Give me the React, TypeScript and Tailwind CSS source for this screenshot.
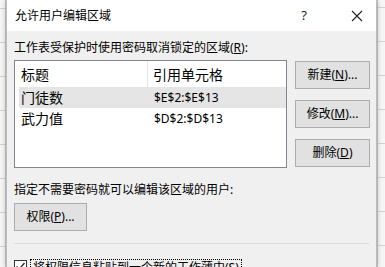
import React from "react";

const font = { fontFamily: '"Noto Sans", "Noto Sans CJK SC", sans-serif' };

function Strip({ first }: { first: number }) {
  const rows = Array.from({ length: 9 });
  return (
    <div className="flex flex-col bg-[#f7f7f7] h-full overflow-hidden">
      <div className="shrink-0 border-b border-[#d4d4d4]" style={{ height: first }} />
      {rows.map((_, i) => (
        <div key={i} className="shrink-0 h-[34px] border-b border-[#d4d4d4]" />
      ))}
    </div>
  );
}

function Btn({ children, w }: { children: React.ReactNode; w: string }) {
  return (
    <div
      className={`${w} h-[28px] flex items-center justify-center bg-[#e1e1e1] border border-[#adadad] text-[12px] text-black leading-none`}
    >
      {children}
    </div>
  );
}

export default function App() {
  return (
    <div className="w-[385px] h-[267px] overflow-hidden flex bg-white" style={font}>
      <div className="w-[6px] shrink-0 border-r border-[#c8c8c8]">
        <Strip first={9} />
      </div>
      <div className="w-[371px] shrink-0 flex flex-col border-x border-[#bdbdbd] shadow-[0_0_6px_rgba(0,0,0,0.25)] z-10">
        <div className="h-[31px] shrink-0 bg-white flex items-center text-[12px] text-black">
          <span className="ml-[8px]">允许用户编辑区域</span>
          <span className="ml-auto mr-[44px] text-[13px] text-[#222]">?</span>
          <svg width="12" height="12" viewBox="0 0 12 12" className="mr-[13px]">
            <path d="M1 1 L11 11 M11 1 L1 11" stroke="#222" strokeWidth="1.1" />
          </svg>
        </div>
        <div className="flex-1 bg-[#f0f0f0] pl-[7px] pr-[6px] pt-[9px] text-black">
          <div className="text-[12px] leading-[16px] h-[16px]">
            工作表受保护时使用密码取消锁定的区域(<span className="underline">R</span>):
          </div>
          <div className="flex mt-[4px]">
            <div className="w-[273px] h-[108px] bg-white border border-[#828790] shrink-0">
              <div className="flex h-[26px] items-center text-[14px]">
                <div className="w-[133px] h-full pl-[6px] flex items-center border-r border-[#e5e5e5]">标题</div>
                <div className="pl-[5px]">引用单元格</div>
              </div>
              <div className="ml-[4px] flex h-[21px] items-center bg-[#e5e5e5]">
                <div className="w-[129px] pl-[2px] text-[14px]">门徒数</div>
                <div className="pl-[6px] text-[12px]">$E$2:$E$13</div>
              </div>
              <div className="ml-[4px] flex h-[21px] items-center">
                <div className="w-[129px] pl-[2px] text-[14px]">武力值</div>
                <div className="pl-[6px] text-[12px]">$D$2:$D$13</div>
              </div>
            </div>
            <div className="ml-[8px] flex flex-col pt-[1px] gap-[11px]">
              <Btn w="w-[75px]">
                新建(<span className="underline">N</span>)...
              </Btn>
              <Btn w="w-[75px]">
                修改(<span className="underline">M</span>)...
              </Btn>
              <Btn w="w-[75px]">
                删除(<span className="underline">D</span>)
              </Btn>
            </div>
          </div>
          <div className="mt-[14px] text-[12px] leading-[16px] h-[16px]">指定不需要密码就可以编辑该区域的用户:</div>
          <div className="mt-[5px]">
            <Btn w="w-[73px]">
              权限(<span className="underline">P</span>)...
            </Btn>
          </div>
          <div className="mt-[12px] h-px bg-[#dcdcdc] mr-[1px]" />
          <div className="mt-[15px] flex items-start">
            <div className="w-[13px] h-[13px] border border-[#333] bg-white flex items-center justify-center shrink-0 mt-[1px]">
              <svg width="11" height="11" viewBox="0 0 11 11">
                <path d="M1.5 5.5 L4.2 8.3 L9.5 2" stroke="#222" strokeWidth="1.3" fill="none" />
              </svg>
            </div>
            <div className="ml-[3px] border border-dotted border-black px-[2px] text-[12px] leading-[16px]">
              将权限信息粘贴到一个新的工作薄中(<span className="underline">S</span>)
            </div>
          </div>
        </div>
      </div>
      <div className="flex-1 border-l border-[#c8c8c8]">
        <Strip first={8} />
      </div>
    </div>
  );
}
